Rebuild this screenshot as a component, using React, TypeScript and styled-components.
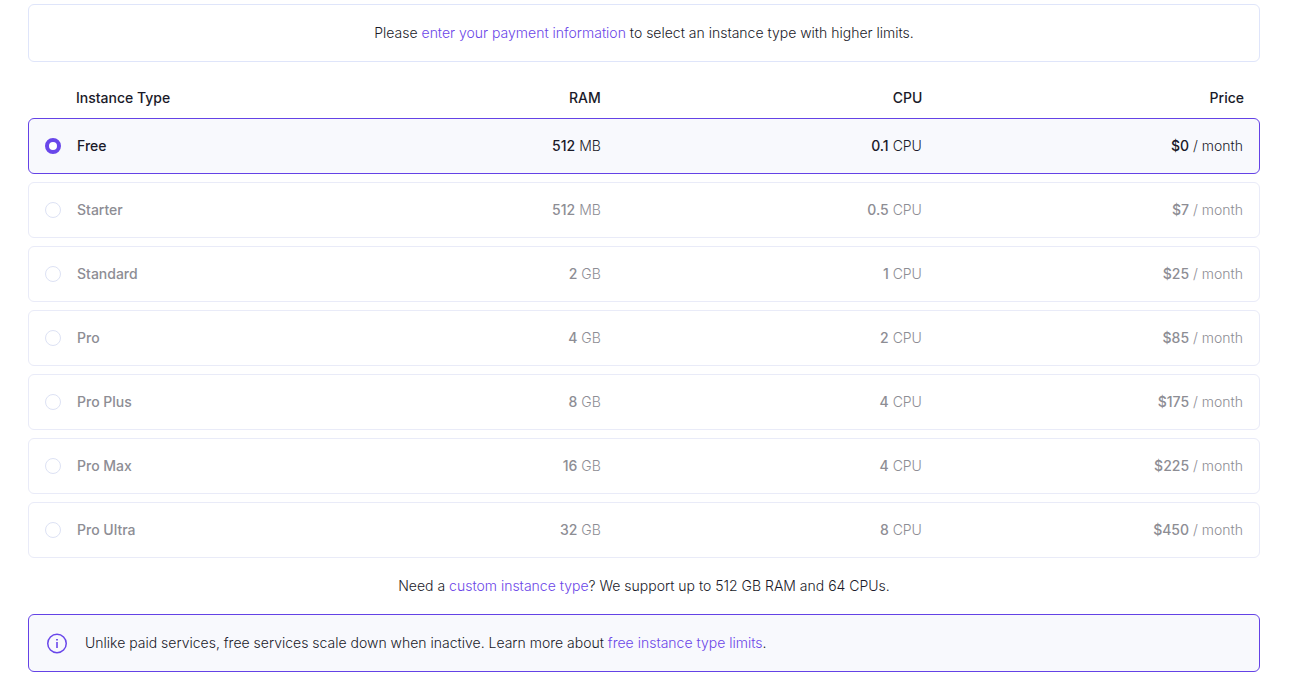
import { useState } from "react";
import styled, { createGlobalStyle } from "styled-components";

const GlobalStyle = createGlobalStyle`
  * {
    box-sizing: border-box;
  }

  body {
    margin: 0;
    background: #ffffff;
    color: #1a1a29;
    font-family: Inter, "Liberation Sans", sans-serif;
    font-size: 14px;
    font-weight: 300;
    line-height: 24px;
  }
`;

const Page = styled.main`
  padding: 4px 51px 9px 28px;
`;

const Banner = styled.p`
  margin: 0;
  padding: 16px;
  border: 1px solid #dfe5fa;
  border-radius: 6px;
  text-align: center;
`;

const Link = styled.a`
  color: #6b46e8;
  text-decoration: none;

  &:hover {
    text-decoration: underline;
  }
`;

const PlanTable = styled.table`
  display: block;
  margin-top: 24px;
`;

const PlanHead = styled.thead`
  display: block;
`;

const PlanBody = styled.tbody`
  display: flex;
  flex-direction: column;
  gap: 8px;
  margin-top: 8px;
`;

const GridRow = styled.tr`
  display: grid;
  grid-template-columns: 32px 12fr 19fr 19fr 19fr;
  align-items: center;
  padding: 0 16px;
`;

const PlanRow = styled(GridRow)<{ $selected: boolean; $disabled: boolean }>`
  padding: 15px 16px;
  border: 1px solid ${(p) => (p.$selected ? "#6442e6" : "#e9ebf8")};
  border-radius: 6px;
  background: ${(p) => (p.$selected ? "#f8f9fd" : "#ffffff")};
  color: ${(p) => (p.$disabled ? "#8d8d94" : "inherit")};
`;

const HeadCell = styled.th<{ $align?: "left" | "right" }>`
  padding: 0;
  font-weight: 500;
  text-align: ${(p) => p.$align ?? "right"};
`;

const NameCell = styled.th`
  padding: 0;
  font-weight: 500;
  text-align: left;
`;

const Cell = styled.td`
  padding: 0;
  text-align: right;
`;

const RadioCell = styled.td`
  display: flex;
  padding: 0;
`;

const Amount = styled.span`
  font-weight: 500;
`;

const Radio = styled.input`
  appearance: none;
  width: 16px;
  height: 16px;
  margin: 0;
  border: 1px solid #dde2f4;
  border-radius: 50%;
  background: #ffffff;

  &:checked {
    border: 4px solid #6947ea;
  }
`;

const Note = styled.p`
  margin: 16px 0;
  text-align: center;
`;

const Callout = styled.aside`
  display: flex;
  align-items: center;
  gap: 16px;
  padding: 16px;
  border: 1px solid #6442e6;
  border-radius: 6px;
  background: #f8f9fd;
`;

const CalloutText = styled.p`
  margin: 0;
`;

const InfoIcon = () => (
  <svg width="24" height="24" viewBox="0 0 24 24" fill="none" aria-hidden="true">
    <circle cx="12" cy="12.5" r="9.25" stroke="#6947ea" strokeWidth="1.5" />
    <path d="M11.1 8h1.8v1.6h-1.8zM11.2 11h1.6v6h-1.6z" fill="#6947ea" />
  </svg>
);

type Plan = {
  name: string;
  ram: string;
  ramUnit: string;
  cpu: string;
  price: string;
};

const plans: Plan[] = [
  { name: "Free", ram: "512", ramUnit: "MB", cpu: "0.1", price: "$0" },
  { name: "Starter", ram: "512", ramUnit: "MB", cpu: "0.5", price: "$7" },
  { name: "Standard", ram: "2", ramUnit: "GB", cpu: "1", price: "$25" },
  { name: "Pro", ram: "4", ramUnit: "GB", cpu: "2", price: "$85" },
  { name: "Pro Plus", ram: "8", ramUnit: "GB", cpu: "4", price: "$175" },
  { name: "Pro Max", ram: "16", ramUnit: "GB", cpu: "4", price: "$225" },
  { name: "Pro Ultra", ram: "32", ramUnit: "GB", cpu: "8", price: "$450" },
];

export default function App() {
  const [selected, setSelected] = useState("Free");

  return (
    <>
      <GlobalStyle />
      <Page>
        <Banner>
          Please <Link href="#billing">enter your payment information</Link> to
          select an instance type with higher limits.
        </Banner>

        <PlanTable>
          <PlanHead>
            <GridRow>
              <td />
              <HeadCell scope="col" $align="left">Instance Type</HeadCell>
              <HeadCell scope="col">RAM</HeadCell>
              <HeadCell scope="col">CPU</HeadCell>
              <HeadCell scope="col">Price</HeadCell>
            </GridRow>
          </PlanHead>
          <PlanBody>
            {plans.map((plan) => {
              const disabled = plan.name !== "Free";
              const id = `plan-${plan.name.toLowerCase().replace(" ", "-")}`;
              return (
                <PlanRow
                  key={plan.name}
                  $selected={plan.name === selected}
                  $disabled={disabled}
                >
                  <RadioCell>
                    <Radio
                      type="radio"
                      name="plan"
                      id={id}
                      disabled={disabled}
                      checked={plan.name === selected}
                      onChange={() => setSelected(plan.name)}
                    />
                  </RadioCell>
                  <NameCell scope="row">
                    <label htmlFor={id}>{plan.name}</label>
                  </NameCell>
                  <Cell>
                    <Amount>{plan.ram}</Amount> {plan.ramUnit}
                  </Cell>
                  <Cell>
                    <Amount>{plan.cpu}</Amount> CPU
                  </Cell>
                  <Cell>
                    <Amount>{plan.price}</Amount> / month
                  </Cell>
                </PlanRow>
              );
            })}
          </PlanBody>
        </PlanTable>

        <Note>
          Need a <Link href="#custom">custom instance type</Link>? We support up
          to 512 GB RAM and 64 CPUs.
        </Note>

        <Callout>
          <InfoIcon />
          <CalloutText>
            Unlike paid services, free services scale down when inactive. Learn
            more about <Link href="#limits">free instance type limits</Link>.
          </CalloutText>
        </Callout>
      </Page>
    </>
  );
}
